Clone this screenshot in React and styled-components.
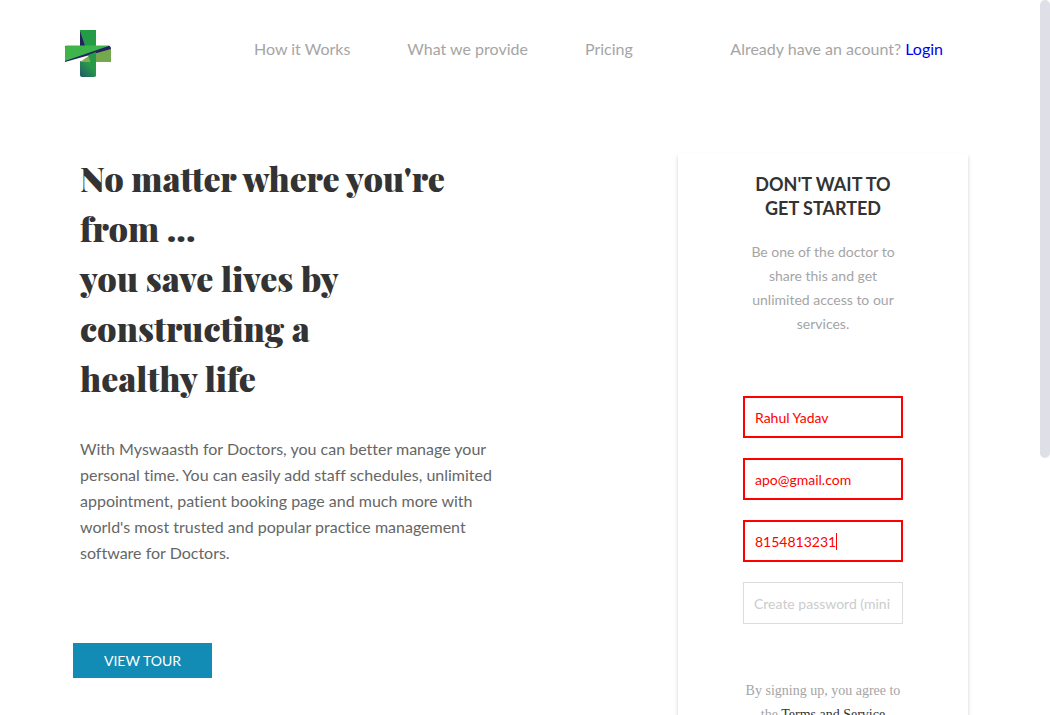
import React from "react";
import styled, { createGlobalStyle } from "styled-components";

const GlobalStyle = createGlobalStyle`
  *, *::before, *::after { box-sizing: border-box; }
  body {
    margin: 0;
    background: #fff;
    font-family: Lato, "Liberation Sans", sans-serif;
    font-size: 16px;
    color: #333;
  }
  h1, h2, p { margin: 0; }
  a { text-decoration: none; }
`;

const Page = styled.div`
  height: 100vh;
  overflow-y: auto;
  scrollbar-width: none;
`;

const ScrollThumb = styled.div`
  position: fixed;
  top: 0;
  right: 0;
  width: 10px;
  height: 64vh;
  border-radius: 5px;
  background: #dfdfe8;
`;

const Header = styled.header`
  display: flex;
  align-items: flex-start;
  padding: 30px 107px 0 65px;
  line-height: 38px;
  color: #a5a5a5;
`;

const Logo = styled.svg`
  display: block;
  flex: none;
  width: 46px;
  height: 47px;
`;

const Nav = styled.nav`
  display: flex;
  gap: 57px;
  margin-left: 143px;
  white-space: nowrap;
`;

const NavLink = styled.a`
  color: inherit;
`;

const Account = styled.p`
  margin-left: auto;
  white-space: nowrap;
`;

const LoginLink = styled.a`
  color: #0000ee;
`;

const Main = styled.main`
  display: flex;
  justify-content: space-between;
  align-items: flex-start;
  gap: 40px;
  padding: 76px 82px 60px 73px;
`;

const Hero = styled.section`
  flex: 0 1 440px;
`;

const HeroText = styled.div`
  padding-left: 7px;
`;

const Title = styled.h1`
  font-family: "Playfair Display", "Liberation Serif", serif;
  font-weight: 900;
  font-size: 34px;
  line-height: 50px;
  white-space: nowrap;
`;

const Lead = styled.p`
  margin-top: 33px;
  font-size: 16px;
  line-height: 26px;
  font-variant-ligatures: none;
  color: #666;
`;

const TourButton = styled.button`
  display: block;
  margin-top: 77px;
  width: 139px;
  height: 35px;
  padding: 0;
  border: 0;
  background: #128bb5;
  color: #fff;
  font: 14px Lato, "Liberation Sans", sans-serif;
  cursor: pointer;
`;

const Card = styled.section`
  flex: 0 0 290px;
  padding: 19px 65px 100px;
  background: #fff;
  box-shadow: 0 3px 4px rgba(0, 0, 0, 0.18);
  text-align: center;
`;

const CardTitle = styled.h2`
  font-size: 18px;
  line-height: 24px;
  font-weight: 700;
`;

const CardText = styled.p`
  margin-top: 20px;
  padding: 0 8px;
  font-size: 14px;
  line-height: 24px;
  color: #a5a5a5;
`;

const Form = styled.form`
  display: grid;
  gap: 20px;
  margin-top: 60px;
`;

const Field = styled.div`
  position: relative;
`;

const Input = styled.input`
  display: block;
  width: 100%;
  height: 42px;
  padding: 0 12px 0 10px;
  border: ${(p) => (p.$invalid ? "2px solid #f00" : "1px solid #ddd")};
  border-radius: 0;
  outline: 0;
  background: #fff;
  color: #f00;
  font: 14px Lato, "Liberation Sans", sans-serif;
  &::placeholder { color: #ccc; opacity: 1; }
`;

const Caret = styled.span`
  position: absolute;
  top: 13px;
  left: 93px;
  width: 1px;
  height: 17px;
  background: #f00;
`;

const Terms = styled.p`
  margin-top: 55px;
  font-family: "Liberation Serif", serif;
  font-size: 14px;
  line-height: 24px;
  color: #a5a5a5;
`;

const TermsLink = styled.a`
  color: #333;
`;

const fields = [
  { label: "Name", type: "text", value: "Rahul Yadav", invalid: true },
  { label: "Email", type: "email", value: "apo@gmail.com", invalid: true },
  { label: "Phone", type: "tel", value: "8154813231", invalid: true, active: true },
  { label: "Password", type: "password", value: "", placeholder: "Create password (minimum 6 characters)" },
];

function CrossLogo() {
  return (
    <Logo viewBox="0 0 46 47" role="img" aria-label="Myswaasth">
      <defs>
        <linearGradient id="stem" x1="1" y1="0" x2="0" y2="1">
          <stop offset="0.3" stopColor="#299b49" />
          <stop offset="1" stopColor="#20596b" />
        </linearGradient>
      </defs>
      <path d="M15 0H31V16H15Z" fill="#259b48" />
      <path d="M15 1L20 16H15Z" fill="#25205f" />
      <path d="M30 23L46 17V32H30Z" fill="#75a84c" />
      <path d="M15 31H31V45Q31 47 29 47H17Q15 47 15 45Z" fill="url(#stem)" />
      <path d="M15 32L25 25L28 32Z" fill="#83ae4f" />
      <path d="M0 16H45L46 19L0 32Z" fill="#252263" />
      <path d="M1 15.500H45L0 31V17Z" fill="#3eb54a" />
      <path d="M23 25L31 22V47Z" fill="#259b48" />
    </Logo>
  );
}

export default function App() {
  return (
    <Page>
      <GlobalStyle />
      <Header>
        <CrossLogo />
        <Nav>
          <NavLink href="#how">How it Works</NavLink>
          <NavLink href="#provide">What we provide</NavLink>
          <NavLink href="#pricing">Pricing</NavLink>
        </Nav>
        <Account>
          Already have an acount? <LoginLink href="#login">Login</LoginLink>
        </Account>
      </Header>
      <Main>
        <Hero>
          <HeroText>
            <Title>
              No matter where you're<br />
              from ...<br />
              you save lives by<br />
              constructing a<br />
              healthy life
            </Title>
            <Lead>
              With Myswaasth for Doctors, you can better manage your personal
              time. You can easily add staff schedules, unlimited appointment,
              patient booking page and much more with world's most trusted and
              popular practice management software for Doctors.
            </Lead>
          </HeroText>
          <TourButton type="button">VIEW TOUR</TourButton>
        </Hero>
        <Card>
          <CardTitle>DON'T WAIT TO GET STARTED</CardTitle>
          <CardText>
            Be one of the doctor to share this and get unlimited access to our
            services.
          </CardText>
          <Form>
            {fields.map((f) => (
              <Field key={f.label}>
                <Input
                  aria-label={f.label}
                  type={f.type}
                  defaultValue={f.value}
                  placeholder={f.placeholder}
                  $invalid={f.invalid}
                />
                {f.active && <Caret />}
              </Field>
            ))}
          </Form>
          <Terms>
            By signing up, you agree to the{" "}
            <TermsLink href="#terms">Terms and Service</TermsLink>
          </Terms>
        </Card>
      </Main>
      <ScrollThumb />
    </Page>
  );
}
